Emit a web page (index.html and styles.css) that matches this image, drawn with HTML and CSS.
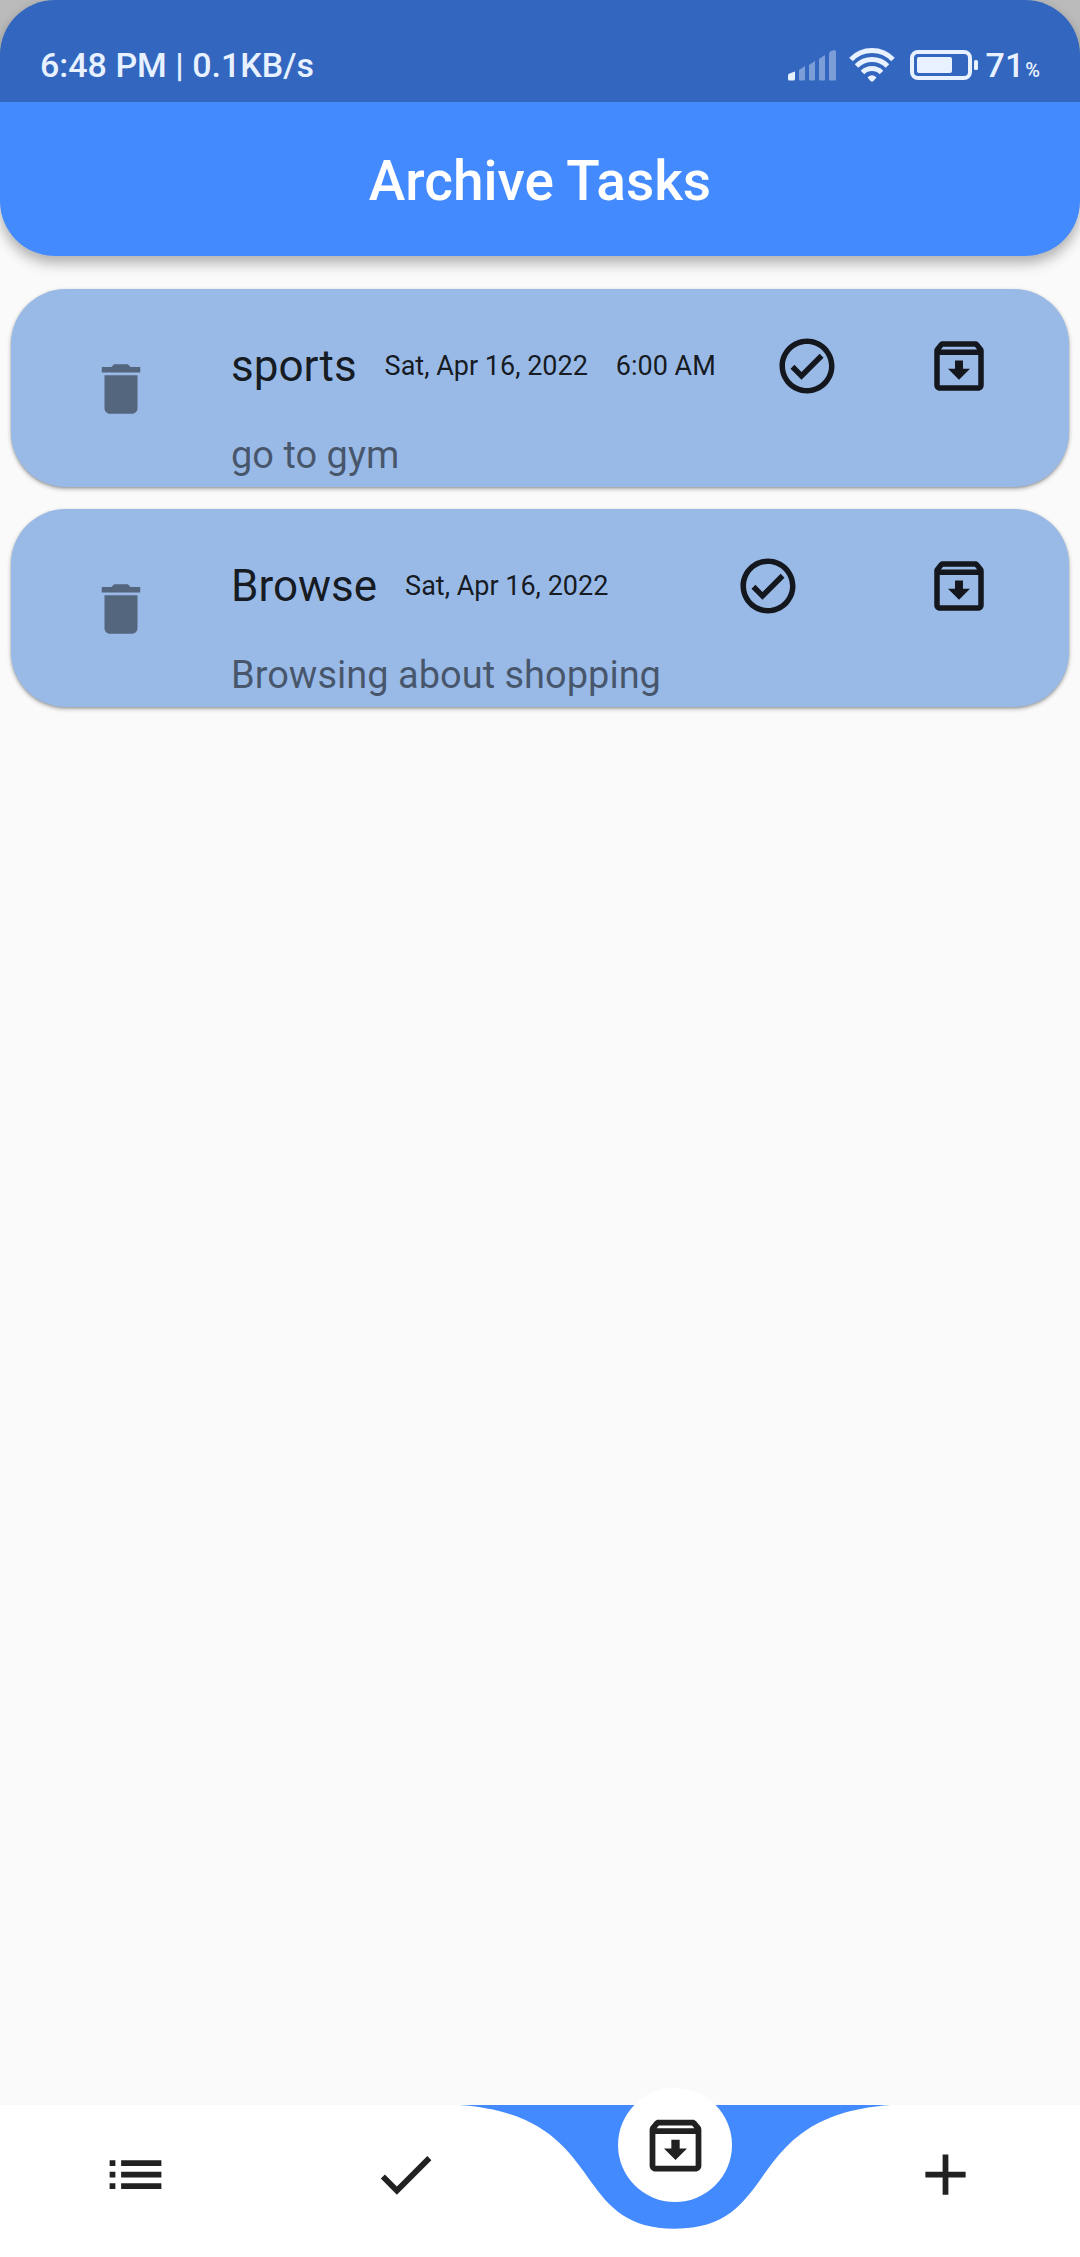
FILE: index.html
```html
<!DOCTYPE html>
<html lang="en">
<head>
  <meta charset="utf-8">
  <meta name="viewport" content="width=device-width, initial-scale=1">
  <title>Archive Tasks</title>
  <link rel="stylesheet" href="styles.css">
</head>
<body>
  <svg class="symbols" aria-hidden="true">
    <symbol id="delete" viewBox="0 0 24 24"><path d="M6 19c0 1.1.9 2 2 2h8c1.1 0 2-.9 2-2V7H6v12zM19 4h-3.5l-1-1h-5l-1 1H5v2h14V4z"/></symbol>
    <symbol id="check-circle" viewBox="0 0 24 24"><path d="M16.59 7.58L10 14.17l-2.59-2.58L6 13l4 4 8-8zM12 2C6.48 2 2 6.48 2 12s4.48 10 10 10 10-4.48 10-10S17.52 2 12 2zm0 18c-4.42 0-8-3.58-8-8s3.58-8 8-8 8 3.58 8 8-3.58 8-8 8z"/></symbol>
    <symbol id="archive" viewBox="0 0 24 24"><path d="M20.54 5.23l-1.39-1.68C18.88 3.21 18.47 3 18 3H6c-.47 0-.88.21-1.16.55L3.46 5.23C3.17 5.57 3 6.02 3 6.5V19c0 1.1.9 2 2 2h14c1.1 0 2-.9 2-2V6.5c0-.48-.17-.93-.46-1.27zM6.24 5h11.52l.83 1H5.42l.82-1zM5 19V8h14v11H5zm8.45-9h-2.9v3H8l4 4 4-4h-2.55z"/></symbol>
    <symbol id="list" viewBox="0 0 24 24"><path d="M3 13h2v-2H3v2zm0 4h2v-2H3v2zm0-8h2V7H3v2zm4 4h14v-2H7v2zm0 4h14v-2H7v2zM7 7v2h14V7H7z"/></symbol>
    <symbol id="check" viewBox="0 0 24 24"><path d="M9 16.17L4.83 12l-1.42 1.41L9 19 21 7l-1.41-1.41z"/></symbol>
    <symbol id="add" viewBox="0 0 24 24"><path d="M19 13h-6v6h-2v-6H5v-2h6V5h2v6h6v2z"/></symbol>
  </svg>

  <div class="top">
    <header class="app-bar">
      <h1 class="app-title">Archive Tasks</h1>
    </header>
    <div class="status-bar">
      <span class="status-text">6:48 PM | 0.1KB/s</span>
      <div class="status-icons">
        <svg class="signal" viewBox="0 0 48 32" aria-hidden="true">
          <path d="M0 26.500q0-1.500 1.500-2L7 22.500V30q0 1.500-1.500 1.500h-4Q0 31.500 0 30z"/>
          <path class="dim" d="M11 21l6-4v13.500q0 1-1 1h-4q-1 0-1-1zM21 16l6-4v18.500q0 1-1 1h-4q-1 0-1-1zM31 10l6-4v24.500q0 1-1 1h-4q-1 0-1-1zM41 5q0-2 2-3l3-1q2 0 2 1.500V30.500q0 1-1 1h-5q-1 0-1-1z"/>
        </svg>
        <svg class="wifi" viewBox="0 0 46 34" aria-hidden="true">
          <path class="wave" d="M2 11.500A29 29 0 0 1 44 11.500M7.500 18A22 22 0 0 1 38.500 18M13.500 24.500A13.500 13.500 0 0 1 32.500 24.500"/>
          <path d="M18.500 29.500q4.500-4.500 9 0L24.500 33q-1.500 1-3 0z"/>
        </svg>
        <svg class="battery" viewBox="0 0 68 30" aria-hidden="true">
          <rect class="case" x="2" y="2" width="58" height="26" rx="6"/>
          <rect x="7" y="7" width="35" height="16" rx="2"/>
          <rect x="64" y="10" width="4" height="10" rx="1.500"/>
        </svg>
        <span class="status-text">71<span class="percent">%</span></span>
      </div>
    </div>
  </div>

  <main>
    <ul class="tasks">
      <li class="task">
        <button class="icon-button delete" type="button" aria-label="Delete sports"><svg class="icon"><use href="#delete"/></svg></button>
        <div class="task-body">
          <div class="task-row">
            <div class="task-head">
              <h2 class="task-title">sports</h2>
              <span class="when">Sat, Apr 16, 2022</span>
              <span class="when">6:00 AM</span>
            </div>
            <button class="icon-button" type="button" aria-label="Mark sports as done"><svg class="icon"><use href="#check-circle"/></svg></button>
            <button class="icon-button" type="button" aria-label="Archive sports"><svg class="icon"><use href="#archive"/></svg></button>
          </div>
          <p class="task-note">go to gym</p>
        </div>
      </li>
      <li class="task">
        <button class="icon-button delete" type="button" aria-label="Delete Browse"><svg class="icon"><use href="#delete"/></svg></button>
        <div class="task-body">
          <div class="task-row">
            <div class="task-head">
              <h2 class="task-title">Browse</h2>
              <span class="when">Sat, Apr 16, 2022</span>
              <span class="when"></span>
            </div>
            <button class="icon-button" type="button" aria-label="Mark Browse as done"><svg class="icon"><use href="#check-circle"/></svg></button>
            <button class="icon-button" type="button" aria-label="Archive Browse"><svg class="icon"><use href="#archive"/></svg></button>
          </div>
          <p class="task-note">Browsing about shopping</p>
        </div>
      </li>
    </ul>
  </main>

  <nav class="nav-bar" aria-label="Main">
    <a class="nav-item" href="#tasks" aria-label="Tasks"><svg class="nav-icon"><use href="#list"/></svg></a>
    <a class="nav-item" href="#done" aria-label="Done"><svg class="nav-icon"><use href="#check"/></svg></a>
    <a class="nav-item active" href="#archived" aria-label="Archive" aria-current="page">
      <svg class="dip" viewBox="0 0 432 124" aria-hidden="true"><path d="M0 0C151.200 10.300 108 123.750 216 123.750S280.800 10.300 432 0z"/></svg>
      <span class="bubble"><svg class="nav-icon"><use href="#archive"/></svg></span>
    </a>
    <a class="nav-item" href="#new" aria-label="Add task"><svg class="nav-icon"><use href="#add"/></svg></a>
  </nav>
</body>
</html>
```
FILE: styles.css
```css
* {
  box-sizing: border-box;
}

body {
  margin: 0;
  min-height: 100vh;
  display: flex;
  flex-direction: column;
  background: #fafafa;
  color: rgba(0, 0, 0, 0.87);
  font-family: Roboto, "Liberation Sans", sans-serif;
}

h1, h2, p, ul {
  margin: 0;
  padding: 0;
}

.symbols {
  display: none;
}

/* The status bar tints whatever lies under it, so both share one grid cell. */
.top {
  display: grid;
}

.app-bar,
.status-bar {
  grid-area: 1 / 1;
}

.app-bar {
  display: flex;
  justify-content: center;
  padding: 106px 44px 0;
  background: #448aff;
  border-radius: 55px;
  box-shadow: 0 6px 11px rgba(0, 0, 0, 0.18), 0 11px 14px rgba(0, 0, 0, 0.08), 0 3px 20px rgba(0, 0, 0, 0.08);
}

.app-title {
  color: #fff;
  font-size: 55px;
  font-weight: 500;
  line-height: 150px;
}

.status-bar {
  align-self: start;
  display: flex;
  justify-content: space-between;
  align-items: center;
  height: 102px;
  padding: 28px 40px 0;
  background: rgba(0, 0, 0, 0.25);
  color: #e8f1ff;
}

.status-text {
  font-size: 34px;
  font-weight: 500;
  line-height: 40px;
}

.percent {
  margin-left: 1px;
  font-size: 20px;
  line-height: 20px;
}

.status-icons {
  display: flex;
  align-items: center;
}

.status-icons svg {
  display: block;
  fill: currentColor;
}

.signal {
  width: 48px;
  height: 32px;
  margin-right: 13px;
}

.dim {
  opacity: 0.4;
}

.wifi {
  width: 46px;
  height: 34px;
  margin-right: 15px;
}

.wave,
.case {
  fill: none;
  stroke: currentColor;
}

.wave {
  stroke-width: 5;
}

.case {
  stroke-width: 4;
}

.battery {
  width: 68px;
  height: 30px;
  margin-right: 8px;
}

main {
  flex: 1;
}

.tasks {
  display: flex;
  flex-direction: column;
  gap: 22px;
  padding: 33px 11px;
  list-style: none;
}

.task {
  display: flex;
  align-items: center;
  gap: 44px;
  padding: 11px 44px 9px;
  background: #99b9e6;
  border-radius: 55px;
  box-shadow: 0 2px 4px rgba(0, 0, 0, 0.3), 0 1px 2px rgba(0, 0, 0, 0.15);
}

.task-body {
  flex: 1;
}

.task-row {
  display: flex;
  justify-content: space-between;
  align-items: center;
}

.task-head {
  display: flex;
  align-items: center;
  gap: 28px;
  padding-right: 6px;
}

.task-title {
  font-size: 44px;
  font-weight: 400;
  line-height: 52px;
}

.when {
  font-size: 27px;
  line-height: 32px;
}

.task-note {
  color: rgba(0, 0, 0, 0.54);
  font-size: 38px;
  line-height: 46px;
}

.icon-button {
  display: grid;
  place-items: center;
  width: 132px;
  height: 132px;
  padding: 0;
  border: 0;
  background: none;
  color: inherit;
}

.icon-button.delete {
  color: rgba(0, 0, 0, 0.45);
}

.icon {
  width: 66px;
  height: 66px;
  fill: currentColor;
}

.nav-bar {
  display: flex;
  height: 152px;
  background: #fff;
}

.nav-item {
  position: relative;
  flex: 1;
  display: flex;
  justify-content: center;
  padding-top: 35px;
  color: #212121;
}

.nav-icon {
  width: 69px;
  height: 69px;
  fill: currentColor;
}

.dip {
  position: absolute;
  top: 0;
  left: 50%;
  width: 432px;
  height: 124px;
  margin-left: -216px;
  fill: #448aff;
}

/* The current page's icon rides in a circle above the bar's top edge. */
.bubble {
  position: absolute;
  top: -17px;
  left: 50%;
  display: grid;
  place-items: center;
  width: 114px;
  height: 114px;
  margin-left: -57px;
  border-radius: 50%;
  background: #fff;
}
```
